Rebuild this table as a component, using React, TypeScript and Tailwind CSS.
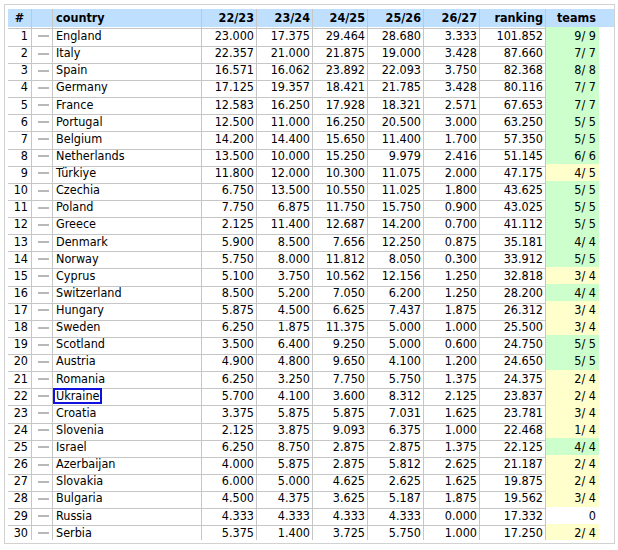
// Country coefficient table — 5-season UEFA points, clipped in a scroll box.

type Row = [string, string, string, string, string, string, string, string];

const rows: Row[] = [
  ['England', '23.000', '17.375', '29.464', '28.680', '3.333', '101.852', '9/ 9'],
  ['Italy', '22.357', '21.000', '21.875', '19.000', '3.428', '87.660', '7/ 7'],
  ['Spain', '16.571', '16.062', '23.892', '22.093', '3.750', '82.368', '8/ 8'],
  ['Germany', '17.125', '19.357', '18.421', '21.785', '3.428', '80.116', '7/ 7'],
  ['France', '12.583', '16.250', '17.928', '18.321', '2.571', '67.653', '7/ 7'],
  ['Portugal', '12.500', '11.000', '16.250', '20.500', '3.000', '63.250', '5/ 5'],
  ['Belgium', '14.200', '14.400', '15.650', '11.400', '1.700', '57.350', '5/ 5'],
  ['Netherlands', '13.500', '10.000', '15.250', '9.979', '2.416', '51.145', '6/ 6'],
  ['Türkiye', '11.800', '12.000', '10.300', '11.075', '2.000', '47.175', '4/ 5'],
  ['Czechia', '6.750', '13.500', '10.550', '11.025', '1.800', '43.625', '5/ 5'],
  ['Poland', '7.750', '6.875', '11.750', '15.750', '0.900', '43.025', '5/ 5'],
  ['Greece', '2.125', '11.400', '12.687', '14.200', '0.700', '41.112', '5/ 5'],
  ['Denmark', '5.900', '8.500', '7.656', '12.250', '0.875', '35.181', '4/ 4'],
  ['Norway', '5.750', '8.000', '11.812', '8.050', '0.300', '33.912', '5/ 5'],
  ['Cyprus', '5.100', '3.750', '10.562', '12.156', '1.250', '32.818', '3/ 4'],
  ['Switzerland', '8.500', '5.200', '7.050', '6.200', '1.250', '28.200', '4/ 4'],
  ['Hungary', '5.875', '4.500', '6.625', '7.437', '1.875', '26.312', '3/ 4'],
  ['Sweden', '6.250', '1.875', '11.375', '5.000', '1.000', '25.500', '3/ 4'],
  ['Scotland', '3.500', '6.400', '9.250', '5.000', '0.600', '24.750', '5/ 5'],
  ['Austria', '4.900', '4.800', '9.650', '4.100', '1.200', '24.650', '5/ 5'],
  ['Romania', '6.250', '3.250', '7.750', '5.750', '1.375', '24.375', '2/ 4'],
  ['Ukraine', '5.700', '4.100', '3.600', '8.312', '2.125', '23.837', '2/ 4'],
  ['Croatia', '3.375', '5.875', '5.875', '7.031', '1.625', '23.781', '3/ 4'],
  ['Slovenia', '2.125', '3.875', '9.093', '6.375', '1.000', '22.468', '1/ 4'],
  ['Israel', '6.250', '8.750', '2.875', '2.875', '1.375', '22.125', '4/ 4'],
  ['Azerbaijan', '4.000', '5.875', '2.875', '5.812', '2.625', '21.187', '2/ 4'],
  ['Slovakia', '6.000', '5.000', '4.625', '2.625', '1.625', '19.875', '2/ 4'],
  ['Bulgaria', '4.500', '4.375', '3.625', '5.187', '1.875', '19.562', '3/ 4'],
  ['Russia', '4.333', '4.333', '4.333', '4.333', '0.000', '17.332', '0'],
  ['Serbia', '5.375', '1.400', '3.725', '5.750', '1.000', '17.250', '2/ 4'],
];

const cols = 'grid grid-cols-[24px_21px_149px_55px_56px_55px_56px_56px_66px_53px]';
const cell = 'border-r border-b border-[#c6c6c6] flex items-center overflow-hidden whitespace-pre';

// still alive in all its slots → green, some already out → yellow, none entered → plain
function teamsBg(t: string) {
  const [a, b] = t.split('/').map((s) => s.trim());
  if (!b) return 'bg-white';
  return a === b ? 'bg-[#ccffcc]' : 'bg-[#ffffcc]';
}

export default function App() {
  return (
    <div className="p-1 bg-white" style={{ fontFamily: '"DejaVu Sans Condensed", "DejaVu Sans", Verdana, sans-serif' }}>
      <div className="w-[611px] h-[540px] border border-[#d2d2d2] pl-[3px] pt-[4px]">
        <div className="h-[531px] overflow-hidden text-[12.5px] text-black">
          <div className={`${cols} h-[18px] bg-[#bfdfff] font-bold`}>
            <div className={`${cell} justify-center`}>#</div>
            <div className={cell}></div>
            <div className={`${cell} pl-[3px]`}>country</div>
            {['22/23', '23/24', '24/25', '25/26', '26/27', 'ranking'].map((h) => (
              <div key={h} className={`${cell} justify-end pr-[2px]`}>{h}</div>
            ))}
            <div className="border-b border-[#c6c6c6] flex items-center justify-end pr-[3px]">teams</div>
          </div>
          {rows.map((r, i) => (
            <div key={r[0]} className={`${cols} h-[17.14px]`}>
              <div className={`${cell} justify-end pr-[3px]`}>{i + 1}</div>
              <div className={`${cell} justify-end pr-[3px]`}>
                <span className="block w-[11px] h-[2px] bg-[#b8b8b8]" />
              </div>
              <div className={`${cell} pl-[3px]`}>
                {r[0] === 'Ukraine' ? (
                  <span className="-ml-[3px] h-[16px] flex items-center border-2 border-[#1010e0] px-px">Ukraine</span>
                ) : (
                  r[0]
                )}
              </div>
              {r.slice(1, 7).map((v, j) => (
                <div key={j} className={`${cell} justify-end pr-[2px]`}>{v}</div>
              ))}
              <div className={`border-b border-[#c6c6c6] flex items-center justify-end pr-[3px] whitespace-pre ${teamsBg(r[7])}`}>
                {r[7]}
              </div>
            </div>
          ))}
        </div>
      </div>
    </div>
  );
}
